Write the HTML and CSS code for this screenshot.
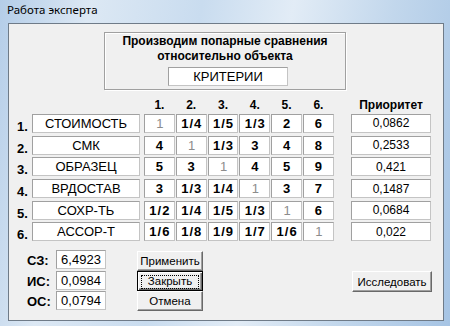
FILE: index.html
```html
<!DOCTYPE html>
<html lang="ru">
<head>
  <meta charset="UTF-8">
  <title>Работа эксперта</title>
  <link rel="stylesheet" href="styles.css">
</head>
<body>
  <div class="window">
    <div class="titlebar">Работа эксперта</div>

    <div class="client">
      <div class="task">
        <div class="task-text">Производим попарные сравнения<br>относительно объекта</div>
        <div class="field object">КРИТЕРИИ</div>
      </div>

      <div class="matrix">
        <!-- header -->
        <span></span>
        <span></span>
        <span class="head">1.</span>
        <span class="head">2.</span>
        <span class="head">3.</span>
        <span class="head">4.</span>
        <span class="head">5.</span>
        <span class="head">6.</span>
        <span class="head prio">Приоритет</span>

        <span class="num">1.</span>
        <span class="field name">СТОИМОСТЬ</span>
        <span class="field cell self">1</span>
        <span class="field cell">1/4</span>
        <span class="field cell">1/5</span>
        <span class="field cell">1/3</span>
        <span class="field cell">2</span>
        <span class="field cell">6</span>
        <span class="field prio value">0,0862</span>

        <span class="num">2.</span>
        <span class="field name">СМК</span>
        <span class="field cell">4</span>
        <span class="field cell self">1</span>
        <span class="field cell">1/3</span>
        <span class="field cell">3</span>
        <span class="field cell">4</span>
        <span class="field cell">8</span>
        <span class="field prio value">0,2533</span>

        <span class="num">3.</span>
        <span class="field name">ОБРАЗЕЦ</span>
        <span class="field cell">5</span>
        <span class="field cell">3</span>
        <span class="field cell self">1</span>
        <span class="field cell">4</span>
        <span class="field cell">5</span>
        <span class="field cell">9</span>
        <span class="field prio value">0,421</span>

        <span class="num">4.</span>
        <span class="field name">ВРДОСТАВ</span>
        <span class="field cell">3</span>
        <span class="field cell">1/3</span>
        <span class="field cell">1/4</span>
        <span class="field cell self">1</span>
        <span class="field cell">3</span>
        <span class="field cell">7</span>
        <span class="field prio value">0,1487</span>

        <span class="num">5.</span>
        <span class="field name">СОХР-ТЬ</span>
        <span class="field cell">1/2</span>
        <span class="field cell">1/4</span>
        <span class="field cell">1/5</span>
        <span class="field cell">1/3</span>
        <span class="field cell self">1</span>
        <span class="field cell">6</span>
        <span class="field prio value">0,0684</span>

        <span class="num">6.</span>
        <span class="field name">АССОР-Т</span>
        <span class="field cell">1/6</span>
        <span class="field cell">1/8</span>
        <span class="field cell">1/9</span>
        <span class="field cell">1/7</span>
        <span class="field cell">1/6</span>
        <span class="field cell self">1</span>
        <span class="field prio value">0,022</span>
      </div>

      <div class="footer">
        <div class="stats">
          <span class="stat-label">СЗ:</span>
          <span class="field stat">6,4923</span>
          <span class="stat-label">ИС:</span>
          <span class="field stat">0,0984</span>
          <span class="stat-label">ОС:</span>
          <span class="field stat">0,0794</span>
        </div>

        <div class="actions">
          <button class="btn">Применить</button>
          <button class="btn default"><span class="focus">Закрыть</span></button>
          <button class="btn">Отмена</button>
        </div>

        <button class="btn explore">Исследовать</button>
      </div>
    </div>
  </div>
</body>
</html>
```

FILE: styles.css
```css
body {
  margin: 0;
  width: 450px;
  height: 326px;
  overflow: hidden;
  font-family: "Liberation Sans", Arial, sans-serif;
  color: #000;
  background: linear-gradient(100deg, #b4cde8 0%, #dce8f4 18%, #c9dcef 40%, #e2ecf6 58%, #c2d7ec 78%, #a6c4e4 100%);
}

.window {
  width: 450px;
  height: 326px;
}

.titlebar {
  height: 23px;
  padding-left: 7px;
  font-family: "Noto Sans", sans-serif;
  font-size: 11.5px;
  line-height: 20px;
  color: #000;
}

.client {
  margin-left: 8px;
  width: 434px;
  height: 296px;
  border: 1px solid #6f7b88;
  background: #f0f0f0;
}

.field {
  display: flex;
  align-items: center;
  justify-content: center;
  box-sizing: border-box;
  height: 19px;
  background: #fff;
  border: 1px solid #c4c4c4;
  border-top-color: #a0a0a0;
  border-left-color: #a0a0a0;
  white-space: nowrap;
}

/* task box */
.task {
  box-sizing: border-box;
  margin: 8px 0 0 95px;
  width: 242px;
  height: 58px;
  border: 1px solid #a0a0a0;
  box-shadow: inset 1px 1px #fff, 1px 1px #fff;
  padding-top: 1px;
}
.task-text {
  font-size: 12px;
  font-weight: bold;
  line-height: 15px;
  text-align: center;
}
.object {
  margin: 3px 0 0 63px;
  width: 120px;
  font-size: 13px;
}

/* comparison matrix */
.matrix {
  display: grid;
  width: 414px;
  grid-template-columns: 15px 112px repeat(6, 31.8px) 1fr;
  grid-template-rows: 13.3px;
  grid-auto-rows: 19px;
  row-gap: 2.7px;
  margin: 8px 0 0 8px;
}
.head {
  font-size: 12px;
  font-weight: bold;
  line-height: 15px;
  text-align: center;
  width: calc(100% - 1px);
}
.num {
  font-size: 13px;
  font-weight: bold;
  line-height: 15px;
  padding-top: 5px;
}
.name {
  width: 108px;
  font-size: 13px;
}
.cell {
  width: calc(100% - 1px);
  padding-left: 1px;
  font-size: 13px;
  font-weight: bold;
  letter-spacing: 1px;
}
.cell.self {
  font-weight: normal;
  color: #8c8c8c;
  letter-spacing: 0;
}
.prio {
  width: 80px;
  justify-self: end;
}
.value {
  font-size: 12px;
}

/* bottom part */
.footer {
  display: flex;
  align-items: flex-start;
  margin: 9px 11px 0 18px;
}
.stats {
  display: grid;
  grid-template-columns: 29px 50px;
  grid-auto-rows: 19px;
  row-gap: 1.5px;
}
.stat-label {
  font-size: 13px;
  font-weight: bold;
  line-height: 15px;
  padding-top: 3px;
}
.stat {
  font-size: 13px;
}

.actions {
  display: flex;
  flex-direction: column;
  margin: 1px 0 0 31px;
}
.btn {
  box-sizing: border-box;
  width: 66px;
  height: 20px;
  padding: 0;
  font-family: "Liberation Sans", Arial, sans-serif;
  font-size: 11.5px;
  color: #000;
  background: #f0f0f0;
  border: 1px solid;
  border-color: #fff #696969 #696969 #fff;
  box-shadow: inset -1px -1px #a0a0a0;
}
.btn.default {
  border: 1px solid #000;
  box-shadow: inset 1px 1px #fff, inset -1px -1px #696969, inset -2px -2px #a0a0a0;
  padding: 3px;
}
.focus {
  display: block;
  height: 12px;
  line-height: 11px;
  border: 1px dotted #000;
}
.explore {
  width: 80px;
  height: 21px;
  margin: 21px 0 0 auto;
}
```
